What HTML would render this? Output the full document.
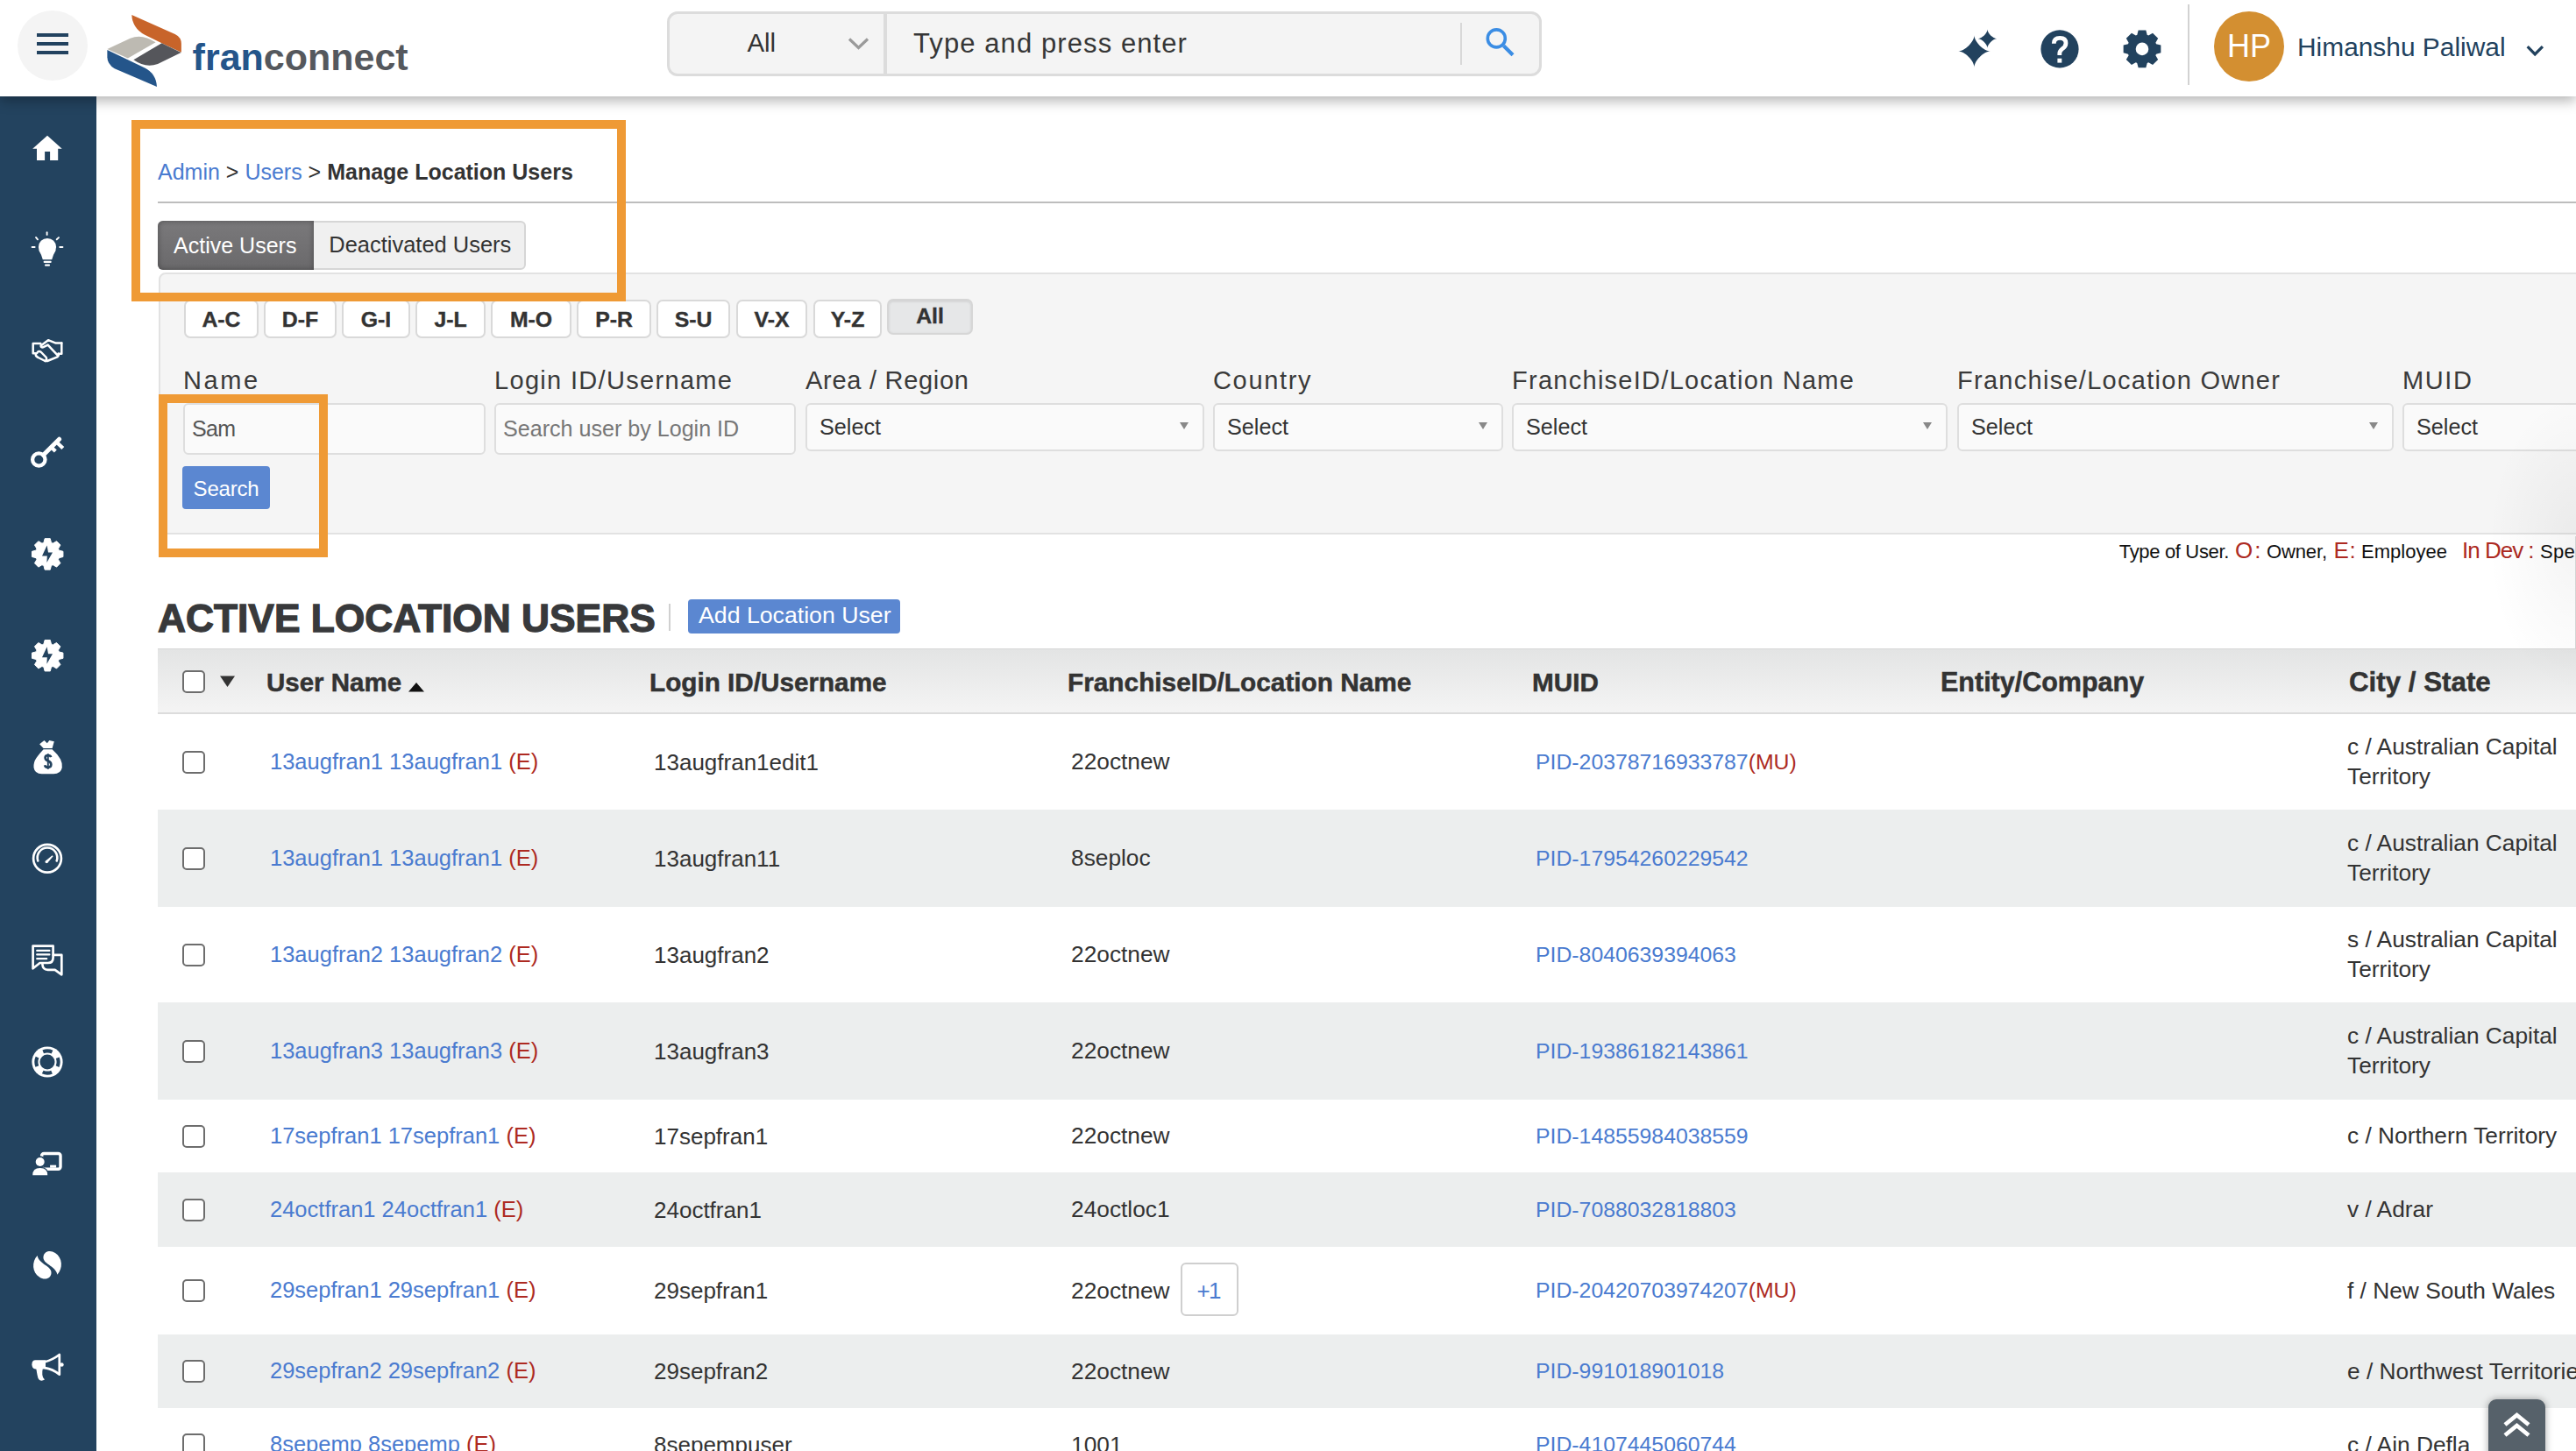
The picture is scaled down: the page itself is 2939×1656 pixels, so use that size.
<!DOCTYPE html><html><head><meta charset="utf-8"><style>
html,body{margin:0;padding:0;}html{overflow:hidden;}
body{width:2939px;height:1656px;overflow:hidden;position:relative;background:#fff;font-family:"Liberation Sans",sans-serif;}
.t{position:absolute;line-height:1;white-space:pre;}
.r{position:absolute;box-sizing:border-box;}
svg{position:absolute;left:0;top:0;}
</style></head><body>
<div class="r" style="left:180px;top:230px;width:2759px;height:2px;background:#bdbdbd"></div>
<div class="r" style="left:180px;top:252px;width:420px;height:56px;background:#f0f0f0;border:2px solid #d6d6d6;border-radius:6px"></div>
<div class="r" style="left:180px;top:252px;width:178px;height:56px;background:linear-gradient(#7a797b,#6a696b);border-radius:6px 0 0 6px;box-shadow:inset 0 0 6px rgba(0,0,0,.35)"></div>
<div class="t " style="left:198.0px;top:267.8px;font-size:25.03px;color:#fff;font-weight:400;">Active Users</div>
<div class="t " style="left:375.3px;top:267.4px;font-size:25.46px;color:#333;font-weight:400;">Deactivated Users</div>
<div class="t " style="left:180.0px;top:183.8px;font-size:25px;color:#333;font-weight:400;"><span style="color:#4a7bd0">Admin</span> &gt; <span style="color:#4a7bd0">Users</span> &gt; <b>Manage Location Users</b></div>
<div class="r" style="left:181px;top:311px;width:2819px;height:299px;background:#f5f5f5;border:2px solid #e2e2e2;border-radius:8px 0 0 0"></div>
<div class="r" style="left:210px;top:342px;width:85px;height:44px;background:#fff;border:2px solid #d9d9d9;border-radius:7px"></div>
<div class="t" style="left:210px;width:85px;top:352.5px;font-size:24.8px;font-weight:700;color:#333;text-align:center;-webkit-text-stroke:0.4px #333">A-C</div>
<div class="r" style="left:301px;top:342px;width:83px;height:44px;background:#fff;border:2px solid #d9d9d9;border-radius:7px"></div>
<div class="t" style="left:301px;width:83px;top:352.5px;font-size:24.8px;font-weight:700;color:#333;text-align:center;-webkit-text-stroke:0.4px #333">D-F</div>
<div class="r" style="left:390px;top:342px;width:78px;height:44px;background:#fff;border:2px solid #d9d9d9;border-radius:7px"></div>
<div class="t" style="left:390px;width:78px;top:352.5px;font-size:24.8px;font-weight:700;color:#333;text-align:center;-webkit-text-stroke:0.4px #333">G-I</div>
<div class="r" style="left:474px;top:342px;width:80px;height:44px;background:#fff;border:2px solid #d9d9d9;border-radius:7px"></div>
<div class="t" style="left:474px;width:80px;top:352.5px;font-size:24.8px;font-weight:700;color:#333;text-align:center;-webkit-text-stroke:0.4px #333">J-L</div>
<div class="r" style="left:560px;top:342px;width:92px;height:44px;background:#fff;border:2px solid #d9d9d9;border-radius:7px"></div>
<div class="t" style="left:560px;width:92px;top:352.5px;font-size:24.8px;font-weight:700;color:#333;text-align:center;-webkit-text-stroke:0.4px #333">M-O</div>
<div class="r" style="left:658px;top:342px;width:85px;height:44px;background:#fff;border:2px solid #d9d9d9;border-radius:7px"></div>
<div class="t" style="left:658px;width:85px;top:352.5px;font-size:24.8px;font-weight:700;color:#333;text-align:center;-webkit-text-stroke:0.4px #333">P-R</div>
<div class="r" style="left:749px;top:342px;width:84px;height:44px;background:#fff;border:2px solid #d9d9d9;border-radius:7px"></div>
<div class="t" style="left:749px;width:84px;top:352.5px;font-size:24.8px;font-weight:700;color:#333;text-align:center;-webkit-text-stroke:0.4px #333">S-U</div>
<div class="r" style="left:840px;top:342px;width:81px;height:44px;background:#fff;border:2px solid #d9d9d9;border-radius:7px"></div>
<div class="t" style="left:840px;width:81px;top:352.5px;font-size:24.8px;font-weight:700;color:#333;text-align:center;-webkit-text-stroke:0.4px #333">V-X</div>
<div class="r" style="left:928px;top:342px;width:78px;height:44px;background:#fff;border:2px solid #d9d9d9;border-radius:7px"></div>
<div class="t" style="left:928px;width:78px;top:352.5px;font-size:24.8px;font-weight:700;color:#333;text-align:center;-webkit-text-stroke:0.4px #333">Y-Z</div>
<div class="r" style="left:1012px;top:341px;width:98px;height:41px;background:#e6e7e8;border:2px solid #d6d6d6;border-radius:7px;box-shadow:inset 0 1px 3px rgba(0,0,0,.12)"></div>
<div class="t" style="left:1012px;width:98px;top:348.5px;font-size:24.8px;font-weight:700;color:#333;text-align:center;-webkit-text-stroke:0.4px #333">All</div>
<div class="t " style="left:209.0px;top:419.5px;font-size:29px;color:#3a3a3a;font-weight:400;letter-spacing:2.55px;">Name</div>
<div class="t " style="left:564.0px;top:419.5px;font-size:29px;color:#3a3a3a;font-weight:400;letter-spacing:1.32px;">Login ID/Username</div>
<div class="t " style="left:919.0px;top:419.5px;font-size:29px;color:#3a3a3a;font-weight:400;letter-spacing:0.72px;">Area / Region</div>
<div class="t " style="left:1384.0px;top:419.5px;font-size:29px;color:#3a3a3a;font-weight:400;letter-spacing:1.66px;">Country</div>
<div class="t " style="left:1725.0px;top:419.5px;font-size:29px;color:#3a3a3a;font-weight:400;letter-spacing:1.27px;">FranchiseID/Location Name</div>
<div class="t " style="left:2233.0px;top:419.5px;font-size:29px;color:#3a3a3a;font-weight:400;letter-spacing:1.28px;">Franchise/Location Owner</div>
<div class="t " style="left:2741.0px;top:419.5px;font-size:29px;color:#3a3a3a;font-weight:400;letter-spacing:1.63px;">MUID</div>
<div class="r" style="left:209px;top:460px;width:345px;height:59px;background:#fafafa;border:2px solid #dedede;border-radius:6px"></div>
<div class="r" style="left:564px;top:460px;width:344px;height:59px;background:#fafafa;border:2px solid #dedede;border-radius:6px"></div>
<div class="t " style="left:219.0px;top:476.8px;font-size:25px;color:#555;font-weight:400;letter-spacing:-0.70px;">Sam</div>
<div class="t " style="left:574.0px;top:476.8px;font-size:25.1px;color:#777;font-weight:400;">Search user by Login ID</div>
<div class="r" style="left:919px;top:460px;width:455px;height:55px;background:#fafafa;border:2px solid #dedede;border-radius:6px"></div>
<div class="t " style="left:935.0px;top:474.7px;font-size:25.2px;color:#333;font-weight:400;">Select</div>
<svg width="2939" height="1656" style="pointer-events:none"><path d="M1346,482 L1356,482 L1351,490 Z" fill="#888"/></svg>
<div class="r" style="left:1384px;top:460px;width:331px;height:55px;background:#fafafa;border:2px solid #dedede;border-radius:6px"></div>
<div class="t " style="left:1400.0px;top:474.7px;font-size:25.2px;color:#333;font-weight:400;">Select</div>
<svg width="2939" height="1656" style="pointer-events:none"><path d="M1687,482 L1697,482 L1692,490 Z" fill="#888"/></svg>
<div class="r" style="left:1725px;top:460px;width:497px;height:55px;background:#fafafa;border:2px solid #dedede;border-radius:6px"></div>
<div class="t " style="left:1741.0px;top:474.7px;font-size:25.2px;color:#333;font-weight:400;">Select</div>
<svg width="2939" height="1656" style="pointer-events:none"><path d="M2194,482 L2204,482 L2199,490 Z" fill="#888"/></svg>
<div class="r" style="left:2233px;top:460px;width:498px;height:55px;background:#fafafa;border:2px solid #dedede;border-radius:6px"></div>
<div class="t " style="left:2249.0px;top:474.7px;font-size:25.2px;color:#333;font-weight:400;">Select</div>
<svg width="2939" height="1656" style="pointer-events:none"><path d="M2703,482 L2713,482 L2708,490 Z" fill="#888"/></svg>
<div class="r" style="left:2741px;top:460px;width:359px;height:55px;background:#fafafa;border:2px solid #dedede;border-radius:6px"></div>
<div class="t " style="left:2757.0px;top:474.7px;font-size:25.2px;color:#333;font-weight:400;">Select</div>
<div class="r" style="left:208px;top:532px;width:100px;height:49px;background:#5b87d1;border-radius:4px"></div>
<div class="t " style="left:220.6px;top:545.7px;font-size:24px;color:#fff;font-weight:400;letter-spacing:-0.21px;">Search</div>
<div class="t " style="left:2417.8px;top:618.6px;font-size:22px;color:#111;font-weight:400;letter-spacing:-0.34px;">Type of User.</div>
<div class="t " style="left:2550.0px;top:615.2px;font-size:26px;color:#ad2a22;font-weight:400;letter-spacing:-2.58px;">O :</div>
<div class="t " style="left:2586.0px;top:618.6px;font-size:22px;color:#111;font-weight:400;letter-spacing:-0.14px;">Owner,</div>
<div class="t " style="left:2662.5px;top:615.2px;font-size:26px;color:#ad2a22;font-weight:400;letter-spacing:-3.34px;">E :</div>
<div class="t " style="left:2694.0px;top:618.6px;font-size:22px;color:#111;font-weight:400;letter-spacing:0.03px;">Employee</div>
<div class="t " style="left:2809.0px;top:615.2px;font-size:26px;color:#ad2a22;font-weight:400;letter-spacing:-1.00px;">In Dev :</div>
<div class="t " style="left:2898.0px;top:618.6px;font-size:22px;color:#111;font-weight:400;letter-spacing:0.3px;">Spec</div>
<div class="t " style="left:180.0px;top:684.0px;font-size:44.3px;color:#38393b;font-weight:700;-webkit-text-stroke:1.3px #38393b;">ACTIVE LOCATION USERS</div>
<div class="r" style="left:763px;top:689px;width:2px;height:31px;background:#d0d0d0"></div>
<div class="r" style="left:785px;top:684px;width:242px;height:39px;background:#5b87d1;border-radius:4px"></div>
<div class="t " style="left:797.0px;top:689.4px;font-size:26.7px;color:#fff;font-weight:400;">Add Location User</div>
<div class="r" style="left:180px;top:740px;width:2820px;height:75px;background:linear-gradient(#e3e4e4,#f4f4f4);border-top:1px solid #d8d8d8;border-bottom:2px solid #dcdcdc"></div>
<div class="r" style="left:208px;top:765px;width:26px;height:26px;background:#fff;border:2px solid #6d6d6d;border-radius:5px"></div>
<svg width="2939" height="1656"><path d="M251,771.5 L268,771.5 L259.5,784 Z" fill="#333"/><path d="M466,789.5 L484,789.5 L475,779 Z" fill="#111"/></svg>
<div class="t " style="left:304.0px;top:764.0px;font-size:29.5px;color:#333;font-weight:700;-webkit-text-stroke:0.5px #333;">User Name</div>
<div class="t " style="left:741.0px;top:763.9px;font-size:29.7px;color:#333;font-weight:700;-webkit-text-stroke:0.5px #333;">Login ID/Username</div>
<div class="t " style="left:1218.0px;top:763.8px;font-size:29.8px;color:#333;font-weight:700;-webkit-text-stroke:0.5px #333;">FranchiseID/Location Name</div>
<div class="t " style="left:1748.0px;top:763.9px;font-size:29.7px;color:#333;font-weight:700;-webkit-text-stroke:0.5px #333;">MUID</div>
<div class="t " style="left:2214.0px;top:763.2px;font-size:30.5px;color:#333;font-weight:700;-webkit-text-stroke:0.5px #333;">Entity/Company</div>
<div class="t " style="left:2680.0px;top:762.5px;font-size:31.3px;color:#333;font-weight:700;-webkit-text-stroke:0.5px #333;">City / State</div>
<div class="r" style="left:208px;top:857px;width:26px;height:26px;background:#fff;border:2px solid #6d6d6d;border-radius:5px"></div>
<div class="t " style="left:308.0px;top:856.9px;font-size:25.5px;color:#4a7bd0;font-weight:400;"><span style="color:#4a7bd0">13augfran1 13augfran1</span> <span style="color:#ad2a22">(E)</span></div>
<div class="t " style="left:746.0px;top:856.5px;font-size:26px;color:#333;font-weight:400;">13augfran1edit1</div>
<div class="t " style="left:1222.0px;top:856.2px;font-size:26.3px;color:#333;font-weight:400;">22octnew</div>
<div class="t " style="left:1752.0px;top:857.5px;font-size:24.8px;color:#4a7bd0;font-weight:400;">PID-20378716933787<span style="color:#ad2a22">(MU)</span></div>
<div class="t " style="left:2678.0px;top:838.7px;font-size:26.3px;color:#333;font-weight:400;">c / Australian Capital</div>
<div class="t " style="left:2678.0px;top:872.7px;font-size:26.3px;color:#333;font-weight:400;">Territory</div>
<div class="r" style="left:180px;top:924px;width:2820px;height:111px;background:#eceeee"></div>
<div class="r" style="left:208px;top:967px;width:26px;height:26px;background:#fff;border:2px solid #6d6d6d;border-radius:5px"></div>
<div class="t " style="left:308.0px;top:966.9px;font-size:25.5px;color:#4a7bd0;font-weight:400;"><span style="color:#4a7bd0">13augfran1 13augfran1</span> <span style="color:#ad2a22">(E)</span></div>
<div class="t " style="left:746.0px;top:966.5px;font-size:26px;color:#333;font-weight:400;">13augfran11</div>
<div class="t " style="left:1222.0px;top:966.2px;font-size:26.3px;color:#333;font-weight:400;">8seploc</div>
<div class="t " style="left:1752.0px;top:967.5px;font-size:24.8px;color:#4a7bd0;font-weight:400;">PID-17954260229542</div>
<div class="t " style="left:2678.0px;top:948.7px;font-size:26.3px;color:#333;font-weight:400;">c / Australian Capital</div>
<div class="t " style="left:2678.0px;top:982.7px;font-size:26.3px;color:#333;font-weight:400;">Territory</div>
<div class="r" style="left:208px;top:1077px;width:26px;height:26px;background:#fff;border:2px solid #6d6d6d;border-radius:5px"></div>
<div class="t " style="left:308.0px;top:1076.9px;font-size:25.5px;color:#4a7bd0;font-weight:400;"><span style="color:#4a7bd0">13augfran2 13augfran2</span> <span style="color:#ad2a22">(E)</span></div>
<div class="t " style="left:746.0px;top:1076.5px;font-size:26px;color:#333;font-weight:400;">13augfran2</div>
<div class="t " style="left:1222.0px;top:1076.2px;font-size:26.3px;color:#333;font-weight:400;">22octnew</div>
<div class="t " style="left:1752.0px;top:1077.5px;font-size:24.8px;color:#4a7bd0;font-weight:400;">PID-8040639394063</div>
<div class="t " style="left:2678.0px;top:1058.7px;font-size:26.3px;color:#333;font-weight:400;">s / Australian Capital</div>
<div class="t " style="left:2678.0px;top:1092.7px;font-size:26.3px;color:#333;font-weight:400;">Territory</div>
<div class="r" style="left:180px;top:1144px;width:2820px;height:111px;background:#eceeee"></div>
<div class="r" style="left:208px;top:1187px;width:26px;height:26px;background:#fff;border:2px solid #6d6d6d;border-radius:5px"></div>
<div class="t " style="left:308.0px;top:1186.9px;font-size:25.5px;color:#4a7bd0;font-weight:400;"><span style="color:#4a7bd0">13augfran3 13augfran3</span> <span style="color:#ad2a22">(E)</span></div>
<div class="t " style="left:746.0px;top:1186.5px;font-size:26px;color:#333;font-weight:400;">13augfran3</div>
<div class="t " style="left:1222.0px;top:1186.2px;font-size:26.3px;color:#333;font-weight:400;">22octnew</div>
<div class="t " style="left:1752.0px;top:1187.5px;font-size:24.8px;color:#4a7bd0;font-weight:400;">PID-19386182143861</div>
<div class="t " style="left:2678.0px;top:1168.7px;font-size:26.3px;color:#333;font-weight:400;">c / Australian Capital</div>
<div class="t " style="left:2678.0px;top:1202.7px;font-size:26.3px;color:#333;font-weight:400;">Territory</div>
<div class="r" style="left:208px;top:1284px;width:26px;height:26px;background:#fff;border:2px solid #6d6d6d;border-radius:5px"></div>
<div class="t " style="left:308.0px;top:1283.9px;font-size:25.5px;color:#4a7bd0;font-weight:400;"><span style="color:#4a7bd0">17sepfran1 17sepfran1</span> <span style="color:#ad2a22">(E)</span></div>
<div class="t " style="left:746.0px;top:1283.5px;font-size:26px;color:#333;font-weight:400;">17sepfran1</div>
<div class="t " style="left:1222.0px;top:1283.2px;font-size:26.3px;color:#333;font-weight:400;">22octnew</div>
<div class="t " style="left:1752.0px;top:1284.5px;font-size:24.8px;color:#4a7bd0;font-weight:400;">PID-14855984038559</div>
<div class="t " style="left:2678.0px;top:1283.2px;font-size:26.3px;color:#333;font-weight:400;">c / Northern Territory</div>
<div class="r" style="left:180px;top:1338px;width:2820px;height:85px;background:#eceeee"></div>
<div class="r" style="left:208px;top:1368px;width:26px;height:26px;background:#fff;border:2px solid #6d6d6d;border-radius:5px"></div>
<div class="t " style="left:308.0px;top:1367.9px;font-size:25.5px;color:#4a7bd0;font-weight:400;"><span style="color:#4a7bd0">24octfran1 24octfran1</span> <span style="color:#ad2a22">(E)</span></div>
<div class="t " style="left:746.0px;top:1367.5px;font-size:26px;color:#333;font-weight:400;">24octfran1</div>
<div class="t " style="left:1222.0px;top:1367.2px;font-size:26.3px;color:#333;font-weight:400;">24octloc1</div>
<div class="t " style="left:1752.0px;top:1368.5px;font-size:24.8px;color:#4a7bd0;font-weight:400;">PID-7088032818803</div>
<div class="t " style="left:2678.0px;top:1367.2px;font-size:26.3px;color:#333;font-weight:400;">v / Adrar</div>
<div class="r" style="left:208px;top:1460px;width:26px;height:26px;background:#fff;border:2px solid #6d6d6d;border-radius:5px"></div>
<div class="t " style="left:308.0px;top:1460.4px;font-size:25.5px;color:#4a7bd0;font-weight:400;"><span style="color:#4a7bd0">29sepfran1 29sepfran1</span> <span style="color:#ad2a22">(E)</span></div>
<div class="t " style="left:746.0px;top:1460.0px;font-size:26px;color:#333;font-weight:400;">29sepfran1</div>
<div class="t " style="left:1222.0px;top:1459.7px;font-size:26.3px;color:#333;font-weight:400;">22octnew</div>
<div class="t " style="left:1752.0px;top:1461.0px;font-size:24.8px;color:#4a7bd0;font-weight:400;">PID-20420703974207<span style="color:#ad2a22">(MU)</span></div>
<div class="t " style="left:2678.0px;top:1459.7px;font-size:26.3px;color:#333;font-weight:400;">f / New South Wales</div>
<div class="r" style="left:1347px;top:1441px;width:66px;height:61px;background:#fff;border:2px solid #cfcfcf;border-radius:6px"></div>
<div class="t " style="left:1365.5px;top:1460.0px;font-size:26px;color:#4a7bd0;font-weight:400;letter-spacing:-1.64px;">+1</div>
<div class="r" style="left:180px;top:1523px;width:2820px;height:84px;background:#eceeee"></div>
<div class="r" style="left:208px;top:1552px;width:26px;height:26px;background:#fff;border:2px solid #6d6d6d;border-radius:5px"></div>
<div class="t " style="left:308.0px;top:1552.4px;font-size:25.5px;color:#4a7bd0;font-weight:400;"><span style="color:#4a7bd0">29sepfran2 29sepfran2</span> <span style="color:#ad2a22">(E)</span></div>
<div class="t " style="left:746.0px;top:1552.0px;font-size:26px;color:#333;font-weight:400;">29sepfran2</div>
<div class="t " style="left:1222.0px;top:1551.7px;font-size:26.3px;color:#333;font-weight:400;">22octnew</div>
<div class="t " style="left:1752.0px;top:1553.0px;font-size:24.8px;color:#4a7bd0;font-weight:400;">PID-991018901018</div>
<div class="t " style="left:2678.0px;top:1551.7px;font-size:26.3px;color:#333;font-weight:400;">e / Northwest Territories</div>
<div class="r" style="left:208px;top:1636px;width:26px;height:26px;background:#fff;border:2px solid #6d6d6d;border-radius:5px"></div>
<div class="t " style="left:308.0px;top:1636.4px;font-size:25.5px;color:#4a7bd0;font-weight:400;"><span style="color:#4a7bd0">8sepemp 8sepemp</span> <span style="color:#ad2a22">(E)</span></div>
<div class="t " style="left:746.0px;top:1636.0px;font-size:26px;color:#333;font-weight:400;">8sepempuser</div>
<div class="t " style="left:1222.0px;top:1635.7px;font-size:26.3px;color:#333;font-weight:400;">1001</div>
<div class="t " style="left:1752.0px;top:1637.0px;font-size:24.8px;color:#4a7bd0;font-weight:400;">PID-4107445060744</div>
<div class="t " style="left:2678.0px;top:1635.7px;font-size:26.3px;color:#333;font-weight:400;">c / Ain Defla</div>
<div class="r" style="left:2840px;top:440px;width:99px;height:360px;background:radial-gradient(ellipse 100px 170px at 100% 50%,rgba(0,0,0,.045),rgba(0,0,0,0))"></div>
<div class="r" style="left:2938px;top:612px;width:1px;height:128px;background:#d4d4d4"></div>
<div class="r" style="left:150px;top:137px;width:564px;height:207px;border:10px solid #ef9a35"></div>
<div class="r" style="left:181px;top:450px;width:193px;height:186px;border:10px solid #ef9a35"></div>
<div class="r" style="left:2839px;top:1597px;width:65px;height:103px;background:#56616a;border-radius:9px;box-shadow:0 0 8px rgba(0,0,0,.35)"></div>
<svg width="2939" height="1656"><path d="M2858,1626 L2871.5,1615 L2885,1626" stroke="#fff" stroke-width="4.8" fill="none"/><path d="M2858,1638 L2871.5,1627 L2885,1638" stroke="#fff" stroke-width="4.8" fill="none"/></svg>
<div class="r" style="left:0px;top:110px;width:110px;height:1546px;background:#23435f"></div>
<svg width="2939" height="1656" viewBox="0 0 2939 1656"><path d="M54,154.7 L37.2,169.8 L42,169.8 L42,183 L51.1,183 L51.1,173 L57.1,173 L57.1,183 L66.2,183 L66.2,169.8 L70.7,169.8 Z" fill="#fff"/><circle cx="54" cy="282" r="10.1" fill="#fff"/><path d="M44.3,285.5 Q47.5,291 48.8,296.3 L59.2,296.3 Q60.5,291 63.7,285.5 Z" fill="#fff"/><rect x="49.6" y="297.8" width="9.1" height="2.2" rx="1" fill="#fff"/><rect x="51" y="301.6" width="6" height="2.1" rx="1" fill="#fff"/><g stroke="#fff" stroke-width="1.9" stroke-linecap="round"><line x1="53.6" y1="265.3" x2="53.6" y2="267.9"/><line x1="41" y1="270.9" x2="43" y2="273.3"/><line x1="67" y1="271.1" x2="64.7" y2="273.3"/><line x1="36.6" y1="282" x2="39.6" y2="282"/><line x1="68.3" y1="282" x2="71.4" y2="282"/></g><g stroke="#fff" stroke-width="2.5" fill="none" stroke-linejoin="round" stroke-linecap="round"><path d="M46.3,392 H37.7 V403.3 H41"/><path d="M70.3,391.6 V403.7 H66.6"/><path d="M47,394.2 L55,388.2 L63.7,391.6 H70.3"/><path d="M46.8,393.8 Q46,397 49,396.3 L54.6,393.6 L65.6,405.4"/><path d="M41,403.3 Q40,406.5 43.5,408 L51.5,412 H54 L65.5,407.3 Q67.5,405.5 66.6,403.7"/><path d="M42.3,402.8 Q44,399.8 47,402 L52.8,408 Q53.8,411.3 51.5,412"/></g><circle cx="44.3" cy="524.5" r="7.2" stroke="#fff" stroke-width="4.3" fill="none"/><line x1="49.5" y1="519.3" x2="67.6" y2="501.2" stroke="#fff" stroke-width="5" stroke-linecap="round"/><line x1="64.2" y1="504.2" x2="71.8" y2="511.6" stroke="#fff" stroke-width="4.2"/><line x1="58.3" y1="510.2" x2="63.3" y2="515" stroke="#fff" stroke-width="4.2"/><path d="M49.95,619.27 L51.10,614.67 L57.30,614.67 L58.45,619.27 L58.97,619.45 L59.48,619.65 L59.98,619.87 L60.48,620.11 L64.55,617.67 L68.93,622.05 L66.49,626.12 L66.73,626.62 L66.95,627.12 L67.15,627.63 L67.33,628.15 L71.93,629.30 L71.93,635.50 L67.33,636.65 L67.15,637.17 L66.95,637.68 L66.73,638.18 L66.49,638.68 L68.93,642.75 L64.55,647.13 L60.48,644.69 L59.98,644.93 L59.48,645.15 L58.97,645.35 L58.45,645.53 L57.30,650.13 L51.10,650.13 L49.95,645.53 L49.43,645.35 L48.92,645.15 L48.42,644.93 L47.92,644.69 L43.85,647.13 L39.47,642.75 L41.91,638.68 L41.67,638.18 L41.45,637.68 L41.25,637.17 L41.07,636.65 L36.47,635.50 L36.47,629.30 L41.07,628.15 L41.25,627.63 L41.45,627.12 L41.67,626.62 L41.91,626.12 L39.47,622.05 L43.85,617.67 L47.92,620.11 L48.42,619.87 L48.92,619.65 L49.43,619.45 Z" fill="#fff" stroke="#fff" stroke-width="1" stroke-linejoin="round"/><path d="M53.6,622.5 L48.0,634.5 L53.8,634.5 L53.4,642.0 L60.0,630.4 L55.0,630.4 Z" fill="#23435f"/><path d="M49.95,735.07 L51.10,730.47 L57.30,730.47 L58.45,735.07 L58.97,735.25 L59.48,735.45 L59.98,735.67 L60.48,735.91 L64.55,733.47 L68.93,737.85 L66.49,741.92 L66.73,742.42 L66.95,742.92 L67.15,743.43 L67.33,743.95 L71.93,745.10 L71.93,751.30 L67.33,752.45 L67.15,752.97 L66.95,753.48 L66.73,753.98 L66.49,754.48 L68.93,758.55 L64.55,762.93 L60.48,760.49 L59.98,760.73 L59.48,760.95 L58.97,761.15 L58.45,761.33 L57.30,765.93 L51.10,765.93 L49.95,761.33 L49.43,761.15 L48.92,760.95 L48.42,760.73 L47.92,760.49 L43.85,762.93 L39.47,758.55 L41.91,754.48 L41.67,753.98 L41.45,753.48 L41.25,752.97 L41.07,752.45 L36.47,751.30 L36.47,745.10 L41.07,743.95 L41.25,743.43 L41.45,742.92 L41.67,742.42 L41.91,741.92 L39.47,737.85 L43.85,733.47 L47.92,735.91 L48.42,735.67 L48.92,735.45 L49.43,735.25 Z" fill="#fff" stroke="#fff" stroke-width="1" stroke-linejoin="round"/><path d="M53.6,738.3 L48.0,750.3 L53.8,750.3 L53.4,757.8 L60.0,746.2 L55.0,746.2 Z" fill="#23435f"/><path d="M45.1,849.3 L50.5,845 L53.8,848.2 L56.3,845 L61.8,846.2 L59.6,854 L49.6,854 Z" fill="#fff"/><path d="M49.6,855.3 L59.6,855.3 Q65.5,860.5 69,866.5 Q71.5,871.5 70.8,876 Q69.5,883.2 61.2,883.2 L47.6,883.2 Q39.5,883 38.5,876 Q38,870 41.5,865 Q45,860 49.6,855.3 Z" fill="#fff"/><path d="M58.2,864.2 Q57.6,862.2 54.8,862.2 Q51.6,862.2 51.6,864.8 Q51.6,867.3 54.8,868.4 Q58.3,869.6 58.3,872.6 Q58.3,875.8 54.8,875.8 Q51.6,875.8 51.2,873.2" stroke="#23435f" stroke-width="2.7" fill="none"/><line x1="54.8" y1="860.2" x2="54.8" y2="877.8" stroke="#23435f" stroke-width="1.9"/><circle cx="54" cy="979.8" r="15.9" stroke="#fff" stroke-width="2.7" fill="none"/><path d="M43.3,982.5 A11.3,11.3 0 1 1 64.7,982.5" stroke="#fff" stroke-width="2.6" fill="none" stroke-linecap="round"/><path d="M52,982.5 L59.6,976.2 L60.6,977.2 L54.3,984.8 Z" fill="#fff"/><circle cx="53.1" cy="983.6" r="1.6" fill="#fff"/><g stroke="#fff" stroke-width="2.7" fill="none" stroke-linejoin="round" stroke-linecap="round"><path d="M37.6,1079.6 H60.6 V1093 Q60.6,1099 54.6,1099 H45.5 L37.6,1105.3 Z"/><path d="M60.8,1089.9 H70.3 V1112.3 L62.7,1106.8 H54.5 Q48.8,1106.8 48.4,1100.5"/></g><g stroke="#fff" stroke-width="2.2" stroke-linecap="round"><line x1="42.2" y1="1084.9" x2="56.4" y2="1084.9"/><line x1="42.2" y1="1089.4" x2="56.4" y2="1089.4"/><line x1="42.2" y1="1094.2" x2="53.2" y2="1094.2"/></g><circle cx="54" cy="1212" r="17.6" fill="#fff"/><circle cx="54" cy="1212" r="8.5" fill="#23435f"/><circle cx="54" cy="1212" r="12.65" stroke="#23435f" stroke-width="4.1" fill="none" stroke-dasharray="10.6 9.27" stroke-dashoffset="5.3"/><rect x="47.6" y="1316.5" width="21.4" height="17.8" rx="2.5" stroke="#fff" stroke-width="3.4" fill="none"/><rect x="57.1" y="1329.7" width="7" height="3" fill="#fff"/><circle cx="45.7" cy="1326" r="6.8" fill="#23435f"/><path d="M37.2,1341.2 Q37.2,1333 45.7,1333 Q54.2,1333 54.2,1341.2 Z" fill="#fff" stroke="#23435f" stroke-width="2.6"/><path d="M37.2,1341.2 Q37.2,1333 45.7,1333 Q54.2,1333 54.2,1341.2 Z" fill="#fff"/><circle cx="45.7" cy="1326" r="5" fill="#fff"/><path d="M42.6,1432.9 C36,1440 36.5,1452 45,1457.5 C50,1461 57,1460 58.4,1454 C59.5,1449 55,1446 52,1444 C48,1441 43.5,1438 42.6,1432.9 Z" fill="#fff"/><path d="M65.4,1454.7 C72,1447.6 71.5,1435.6 63,1430.1 C58,1426.6 51,1427.6 49.6,1433.6 C48.5,1438.6 53,1441.6 56,1443.6 C60,1446.6 64.5,1449.6 65.4,1454.7 Z" fill="#fff"/><path d="M51.3,1554.2 Q60,1552 67.8,1546 V1568.7 Q60,1562.5 51.3,1561.2" stroke="#fff" stroke-width="2.7" fill="none" stroke-linejoin="round"/><circle cx="70.4" cy="1557.5" r="2.3" fill="#fff"/><path d="M40.5,1552.2 H52 V1562.4 H40.5 Q36.4,1562.4 36.4,1557.3 Q36.4,1552.2 40.5,1552.2 Z" fill="#fff"/><path d="M41.3,1562 H48.8 Q48,1565 48.3,1569 Q48.5,1572.5 51,1574.5 Q48,1576.5 45,1575 Q43,1573 42.5,1569 Z" fill="#fff"/></svg>
<div class="r" style="left:0px;top:0px;width:2939px;height:110px;background:#fff;box-shadow:0 5px 14px rgba(0,0,0,.30)"></div>
<svg width="2939" height="1656" viewBox="0 0 2939 1656"><circle cx="60" cy="52" r="40" fill="#f4f4f4"/><rect x="42" y="38" width="36" height="4" fill="#22425f"/><rect x="42" y="48" width="36" height="4" fill="#22425f"/><rect x="42" y="58" width="36" height="4" fill="#22425f"/><path d="M150.3,16.9 L199.7,39 Q206.9,42.5 206.9,50 L206.9,59.7 L184.5,49.3 L165.2,39.7 Q151,32 150.3,16.9 Z" fill="#c8642a"/><path d="M122.4,55.9 L148.6,43.8 Q162,38 177.6,48.3 L145.9,66.6 Z" fill="#bdbab2"/><path d="M184.5,49.3 L206.6,60 L180,73 Q166,78 152.4,68.3 Z" fill="#55565b"/><path d="M122.4,56.9 L165.2,77.6 Q178,84 179,99 L130.7,78.3 Q122.4,73 122.4,65.2 Z" fill="#24558a"/></svg>
<div class="t " style="left:219.6px;top:44.3px;font-size:43px;color:#24558a;font-weight:700;"><span style="color:#24558a">fran</span><span style="color:#55585d">connect</span></div>
<div class="r" style="left:761px;top:13px;width:998px;height:74px;background:#f4f4f4;border:3px solid #dcdcdc;border-radius:12px"></div>
<div class="r" style="left:1008px;top:13px;width:4px;height:74px;background:#dcdcdc"></div>
<div class="r" style="left:1666px;top:26px;width:2px;height:48px;background:#d8d8d8"></div>
<div class="t " style="left:852.4px;top:34.1px;font-size:29.5px;color:#333;font-weight:400;letter-spacing:-0.09px;">All</div>
<div class="t " style="left:1042.0px;top:33.8px;font-size:31px;color:#363636;font-weight:400;letter-spacing:1.09px;">Type and press enter</div>
<svg width="2939" height="1656" viewBox="0 0 2939 1656"><path d="M969,44.5 L979.5,54.5 L990,44.5" stroke="#9a9a9a" stroke-width="3.2" fill="none"/><circle cx="1707.3" cy="43.9" r="10" stroke="#3b8de4" stroke-width="3.6" fill="none"/><line x1="1715.5" y1="52.3" x2="1726" y2="62.7" stroke="#3b8de4" stroke-width="4.2"/><path d="M2252.5,40.3 C2252.5,47.620000000000005 2263.48,58.6 2270.8,58.6 C2263.48,58.6 2252.5,69.58 2252.5,76.9 C2252.5,69.58 2241.52,58.6 2234.2,58.6 C2241.52,58.6 2252.5,47.620000000000005 2252.5,40.3 Z" fill="#22425e"/><path d="M2267.5,33.6 C2267.5,37.84 2273.86,44.2 2278.1,44.2 C2273.86,44.2 2267.5,50.56 2267.5,54.800000000000004 C2267.5,50.56 2261.14,44.2 2256.9,44.2 C2261.14,44.2 2267.5,37.84 2267.5,33.6 Z" fill="#22425e" stroke="#fff" stroke-width="0"/><circle cx="2350" cy="55.9" r="21.6" fill="#22425e"/><path d="M2343.3,49.8 Q2343.3,43.3 2350.2,43.3 Q2357,43.3 2357,49.2 Q2357,52.8 2353,55.6 Q2349.8,58 2349.8,61 V63" stroke="#fff" stroke-width="4.8" fill="none"/><rect x="2347.4" y="66.7" width="4.9" height="4.9" fill="#fff"/><path d="M2438.25,39.90 L2439.65,34.54 L2448.35,34.54 L2449.75,39.90 L2450.13,40.04 L2450.51,40.19 L2450.88,40.35 L2451.25,40.52 L2456.03,37.72 L2462.18,43.87 L2459.38,48.65 L2459.55,49.02 L2459.71,49.39 L2459.86,49.77 L2460.00,50.15 L2465.36,51.55 L2465.36,60.25 L2460.00,61.65 L2459.86,62.03 L2459.71,62.41 L2459.55,62.78 L2459.38,63.15 L2462.18,67.93 L2456.03,74.08 L2451.25,71.28 L2450.88,71.45 L2450.51,71.61 L2450.13,71.76 L2449.75,71.90 L2448.35,77.26 L2439.65,77.26 L2438.25,71.90 L2437.87,71.76 L2437.49,71.61 L2437.12,71.45 L2436.75,71.28 L2431.97,74.08 L2425.82,67.93 L2428.62,63.15 L2428.45,62.78 L2428.29,62.41 L2428.14,62.03 L2428.00,61.65 L2422.64,60.25 L2422.64,51.55 L2428.00,50.15 L2428.14,49.77 L2428.29,49.39 L2428.45,49.02 L2428.62,48.65 L2425.82,43.87 L2431.97,37.72 L2436.75,40.52 L2437.12,40.35 L2437.49,40.19 L2437.87,40.04 Z" fill="#22425e"/><circle cx="2444" cy="55.9" r="7.3" fill="#fff"/><rect x="2496" y="5" width="2" height="92" fill="#d2d2d2"/><circle cx="2566" cy="53" r="40" fill="#d38f31"/><path d="M2883.7,53.2 L2892.2,61.8 L2900.9,53.2" stroke="#22425e" stroke-width="3.3" fill="none"/></svg>
<div class="t" style="left:2526px;width:80px;text-align:center;top:34.7px;font-size:36px;color:#fff">HP</div>
<div class="t " style="left:2621.0px;top:38.7px;font-size:29.9px;color:#22425e;font-weight:400;">Himanshu Paliwal</div>
</body></html>
